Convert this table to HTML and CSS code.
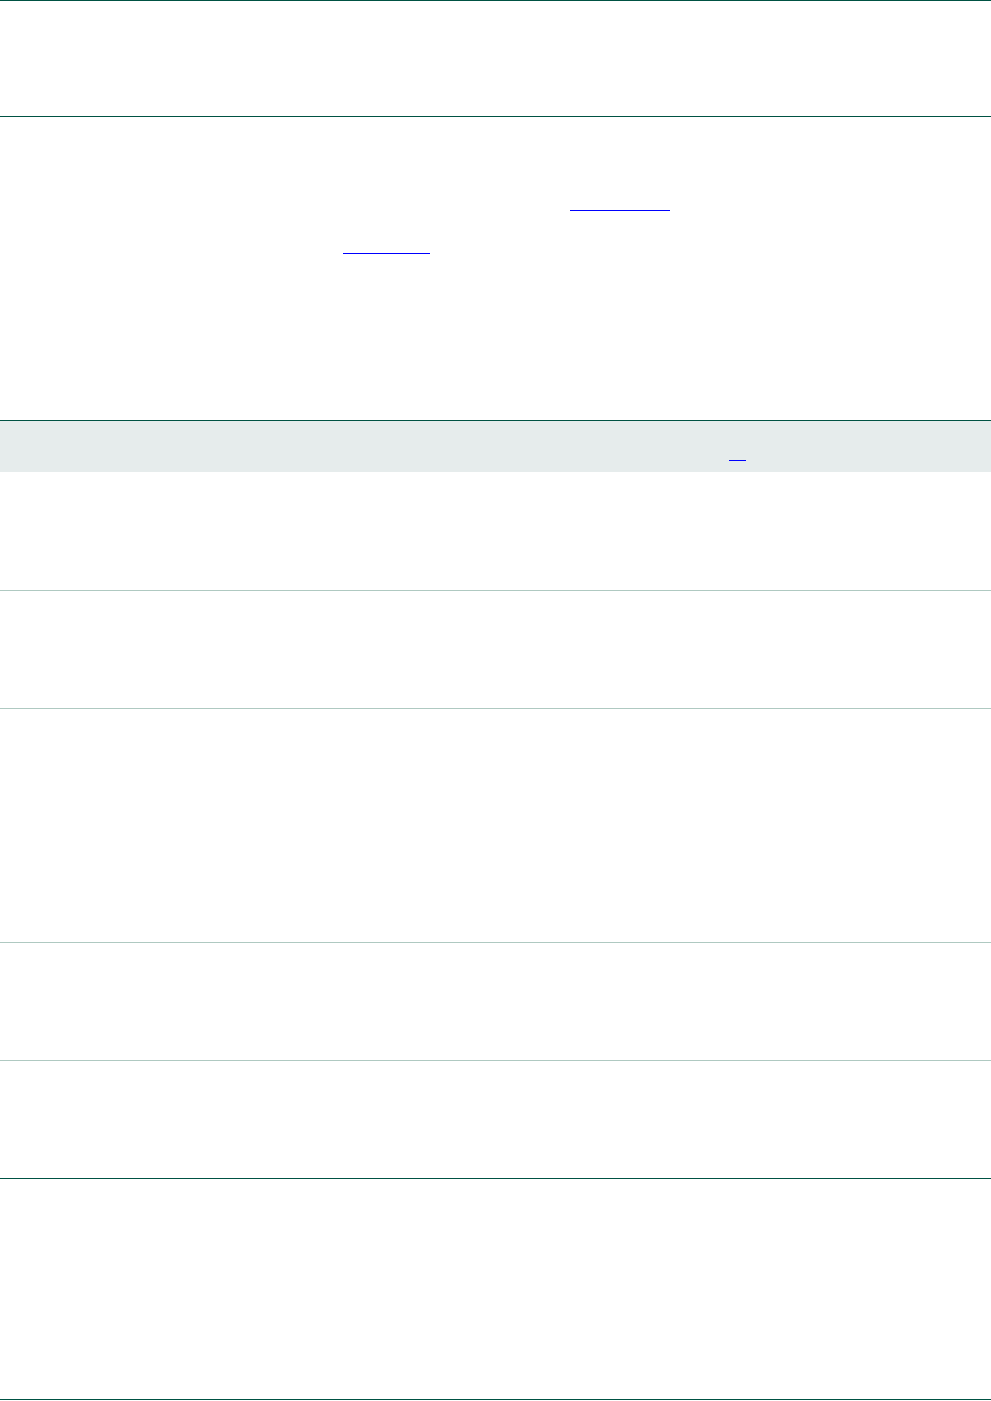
FILE: index.html
```html
<!DOCTYPE html>
<html lang="en">

<head>
    <link rel="stylesheet" href="styles.css">
</head>

<body>
    <div class="page-head"></div>

    <div class="intro">
        <div class="intro-line first"><a class="ref wide" href="#"></a></div>
        <div class="intro-line second"><a class="ref mid" href="#"></a></div>
    </div>

    <div class="table">
        <div class="table-head">
            <a class="ref note" href="#"></a>
        </div>
        <div class="row"></div>
        <div class="row"></div>
        <div class="row tall"></div>
        <div class="row"></div>
        <div class="row last"></div>
    </div>

    <div class="page-foot"></div>
</body>

</html>
```

FILE: styles.css
```css
body {
    font-family: "Liberation Sans", Arial, sans-serif;
    margin: 0;
    padding: 0;
    background-color: #fff;
}

.page-head {
    height: 115px;
    border-top: 1px solid #005243;
    border-bottom: 1px solid #005243;
}

.intro {
    height: 303px;
}

.intro-line {
    height: 1px;
}

.intro-line.first {
    padding-top: 93px;
    padding-left: 570px;
}

.intro-line.second {
    padding-top: 42px;
    padding-left: 343px;
}

.ref {
    display: block;
    height: 0;
    border-bottom: 1px solid #0000ff;
}

.ref.wide {
    width: 100px;
}

.ref.mid {
    width: 87px;
}

.table {
    border-top: 1px solid #005243;
}

.table-head {
    height: 51px;
    background: #e6ecec;
    box-sizing: border-box;
    padding-top: 39px;
    padding-left: 729px;
}

.ref.note {
    width: 17px;
}

.row {
    height: 117px;
    border-bottom: 1px solid #afc9c1;
}

.row:first-of-type,
.table-head + .row {
    height: 118px;
}

.row.tall {
    height: 233px;
}

.row.last {
    border-bottom-color: #005243;
}

.page-foot {
    height: 220px;
    border-bottom: 1px solid #005243;
}
```
